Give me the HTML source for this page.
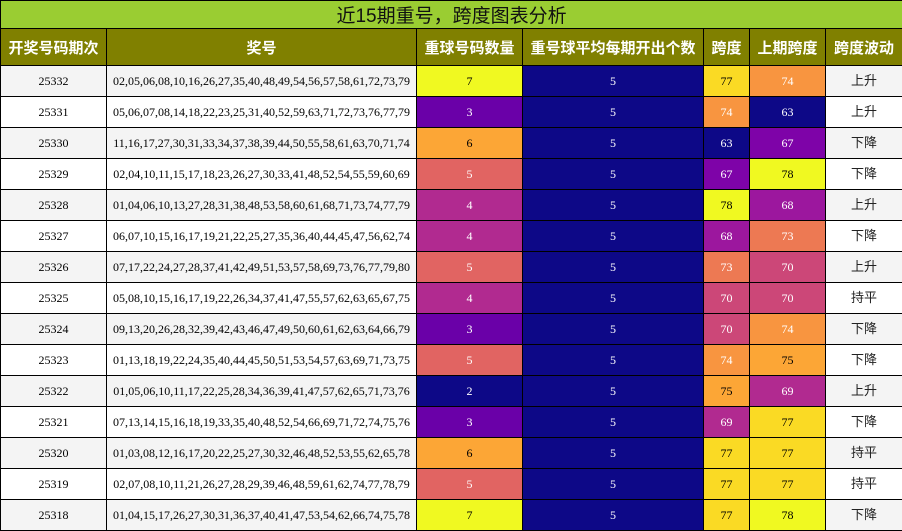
<!DOCTYPE html>
<html><head><meta charset="utf-8"><style>
body{margin:0;width:902px;height:531px;overflow:hidden;background:#fff}
table{border-collapse:collapse;width:902px;table-layout:fixed;font-family:"Liberation Serif","Noto Serif CJK SC",serif;font-size:12px}
td,th{border:1px solid #000;text-align:center;padding:0;overflow:hidden;white-space:nowrap}
.t{height:26px;background:#9acd32;font-family:"Liberation Sans","Noto Sans CJK SC",sans-serif;font-size:19px;color:#111;font-weight:normal}
th{height:36px;background:#808000;color:#fff;font-family:"Liberation Sans","Noto Sans CJK SC",sans-serif;font-size:15px;font-weight:bold}
tr.r td{height:30px;line-height:14px}
tr.r:nth-child(odd) td{background:#f4f4f4}
tr.r td.z{font-family:"Liberation Sans","Noto Sans CJK SC",sans-serif;font-size:13px;color:#222}
.w{color:#fff}
</style></head><body>
<table>
<colgroup><col style="width:106px"><col style="width:310px"><col style="width:106px"><col style="width:181px"><col style="width:46px"><col style="width:76px"><col style="width:77px"></colgroup>
<tr><th colspan="7" class="t">近15期重号，跨度图表分析</th></tr>
<tr><th>开奖号码期次</th><th>奖号</th><th>重球号码数量</th><th>重号球平均每期开出个数</th><th>跨度</th><th>上期跨度</th><th>跨度波动</th></tr>
<tr class="r"><td>25332</td><td>02,05,06,08,10,16,26,27,35,40,48,49,54,56,57,58,61,72,73,79</td><td style="background:#f0f921!important">7</td><td class="w" style="background:#0d0887!important">5</td><td style="background:#fada24!important">77</td><td class="w" style="background:#f89540!important">74</td><td class="z">上升</td></tr>
<tr class="r"><td>25331</td><td>05,06,07,08,14,18,22,23,25,31,40,52,59,63,71,72,73,76,77,79</td><td class="w" style="background:#6a00a8!important">3</td><td class="w" style="background:#0d0887!important">5</td><td class="w" style="background:#f89540!important">74</td><td class="w" style="background:#0d0887!important">63</td><td class="z">上升</td></tr>
<tr class="r"><td>25330</td><td>11,16,17,27,30,31,33,34,37,38,39,44,50,55,58,61,63,70,71,74</td><td style="background:#fca636!important">6</td><td class="w" style="background:#0d0887!important">5</td><td class="w" style="background:#0d0887!important">63</td><td class="w" style="background:#7e03a8!important">67</td><td class="z">下降</td></tr>
<tr class="r"><td>25329</td><td>02,04,10,11,15,17,18,23,26,27,30,33,41,48,52,54,55,59,60,69</td><td class="w" style="background:#e16462!important">5</td><td class="w" style="background:#0d0887!important">5</td><td class="w" style="background:#7e03a8!important">67</td><td style="background:#f0f921!important">78</td><td class="z">下降</td></tr>
<tr class="r"><td>25328</td><td>01,04,06,10,13,27,28,31,38,48,53,58,60,61,68,71,73,74,77,79</td><td class="w" style="background:#b12a90!important">4</td><td class="w" style="background:#0d0887!important">5</td><td style="background:#f0f921!important">78</td><td class="w" style="background:#9c179e!important">68</td><td class="z">上升</td></tr>
<tr class="r"><td>25327</td><td>06,07,10,15,16,17,19,21,22,25,27,35,36,40,44,45,47,56,62,74</td><td class="w" style="background:#b12a90!important">4</td><td class="w" style="background:#0d0887!important">5</td><td class="w" style="background:#9c179e!important">68</td><td class="w" style="background:#ed7953!important">73</td><td class="z">下降</td></tr>
<tr class="r"><td>25326</td><td>07,17,22,24,27,28,37,41,42,49,51,53,57,58,69,73,76,77,79,80</td><td class="w" style="background:#e16462!important">5</td><td class="w" style="background:#0d0887!important">5</td><td class="w" style="background:#ed7953!important">73</td><td class="w" style="background:#cc4778!important">70</td><td class="z">上升</td></tr>
<tr class="r"><td>25325</td><td>05,08,10,15,16,17,19,22,26,34,37,41,47,55,57,62,63,65,67,75</td><td class="w" style="background:#b12a90!important">4</td><td class="w" style="background:#0d0887!important">5</td><td class="w" style="background:#cc4778!important">70</td><td class="w" style="background:#cc4778!important">70</td><td class="z">持平</td></tr>
<tr class="r"><td>25324</td><td>09,13,20,26,28,32,39,42,43,46,47,49,50,60,61,62,63,64,66,79</td><td class="w" style="background:#6a00a8!important">3</td><td class="w" style="background:#0d0887!important">5</td><td class="w" style="background:#cc4778!important">70</td><td class="w" style="background:#f89540!important">74</td><td class="z">下降</td></tr>
<tr class="r"><td>25323</td><td>01,13,18,19,22,24,35,40,44,45,50,51,53,54,57,63,69,71,73,75</td><td class="w" style="background:#e16462!important">5</td><td class="w" style="background:#0d0887!important">5</td><td class="w" style="background:#f89540!important">74</td><td style="background:#fca636!important">75</td><td class="z">下降</td></tr>
<tr class="r"><td>25322</td><td>01,05,06,10,11,17,22,25,28,34,36,39,41,47,57,62,65,71,73,76</td><td class="w" style="background:#0d0887!important">2</td><td class="w" style="background:#0d0887!important">5</td><td style="background:#fca636!important">75</td><td class="w" style="background:#b12a90!important">69</td><td class="z">上升</td></tr>
<tr class="r"><td>25321</td><td>07,13,14,15,16,18,19,33,35,40,48,52,54,66,69,71,72,74,75,76</td><td class="w" style="background:#6a00a8!important">3</td><td class="w" style="background:#0d0887!important">5</td><td class="w" style="background:#b12a90!important">69</td><td style="background:#fada24!important">77</td><td class="z">下降</td></tr>
<tr class="r"><td>25320</td><td>01,03,08,12,16,17,20,22,25,27,30,32,46,48,52,53,55,62,65,78</td><td style="background:#fca636!important">6</td><td class="w" style="background:#0d0887!important">5</td><td style="background:#fada24!important">77</td><td style="background:#fada24!important">77</td><td class="z">持平</td></tr>
<tr class="r"><td>25319</td><td>02,07,08,10,11,21,26,27,28,29,39,46,48,59,61,62,74,77,78,79</td><td class="w" style="background:#e16462!important">5</td><td class="w" style="background:#0d0887!important">5</td><td style="background:#fada24!important">77</td><td style="background:#fada24!important">77</td><td class="z">持平</td></tr>
<tr class="r"><td>25318</td><td>01,04,15,17,26,27,30,31,36,37,40,41,47,53,54,62,66,74,75,78</td><td style="background:#f0f921!important">7</td><td class="w" style="background:#0d0887!important">5</td><td style="background:#fada24!important">77</td><td style="background:#f0f921!important">78</td><td class="z">下降</td></tr>
</table>
</body></html>
